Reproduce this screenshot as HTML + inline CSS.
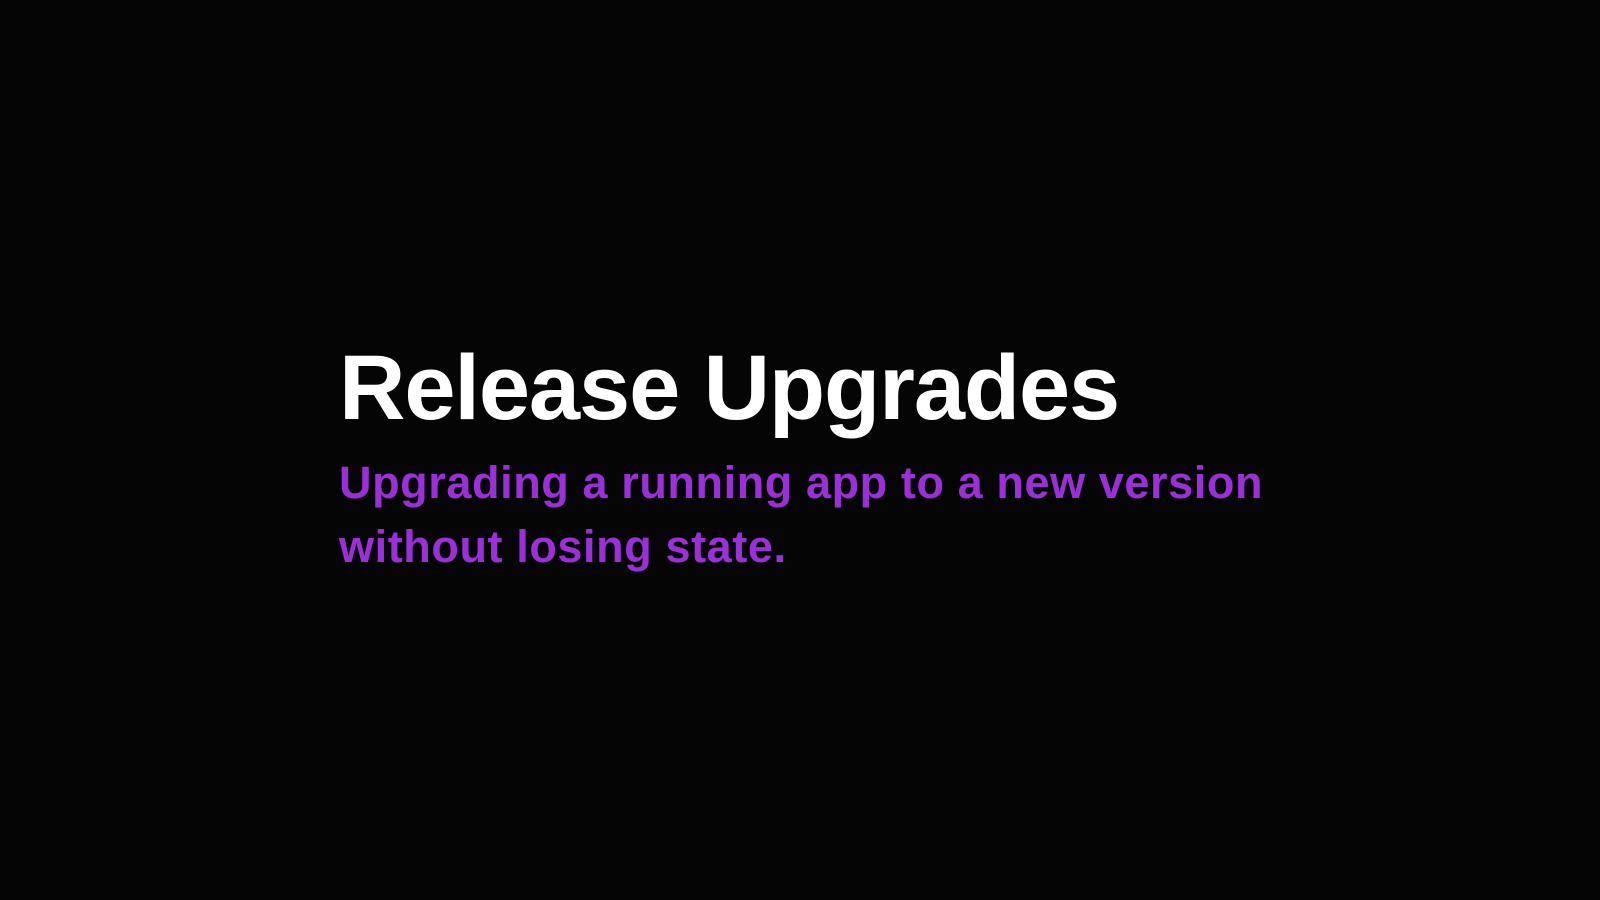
<!DOCTYPE html>
<html><head><meta charset="utf-8"><style>
html,body{margin:0;padding:0;width:1600px;height:900px;background:#050505;overflow:hidden}
.wrap{position:absolute;left:339px;top:338px;font-family:"Liberation Sans",sans-serif;font-weight:bold}
h1{margin:0;color:#fff;font-size:92px;line-height:100px;letter-spacing:-1.1px}
p{margin:13px 0 0 0;color:#9b30d9;font-size:45px;line-height:64px;letter-spacing:0.6px}
</style></head><body>
<div class="wrap">
<h1>Release Upgrades</h1>
<p>Upgrading a running app to a new version<br>without losing state.</p>
</div>
</body></html>
